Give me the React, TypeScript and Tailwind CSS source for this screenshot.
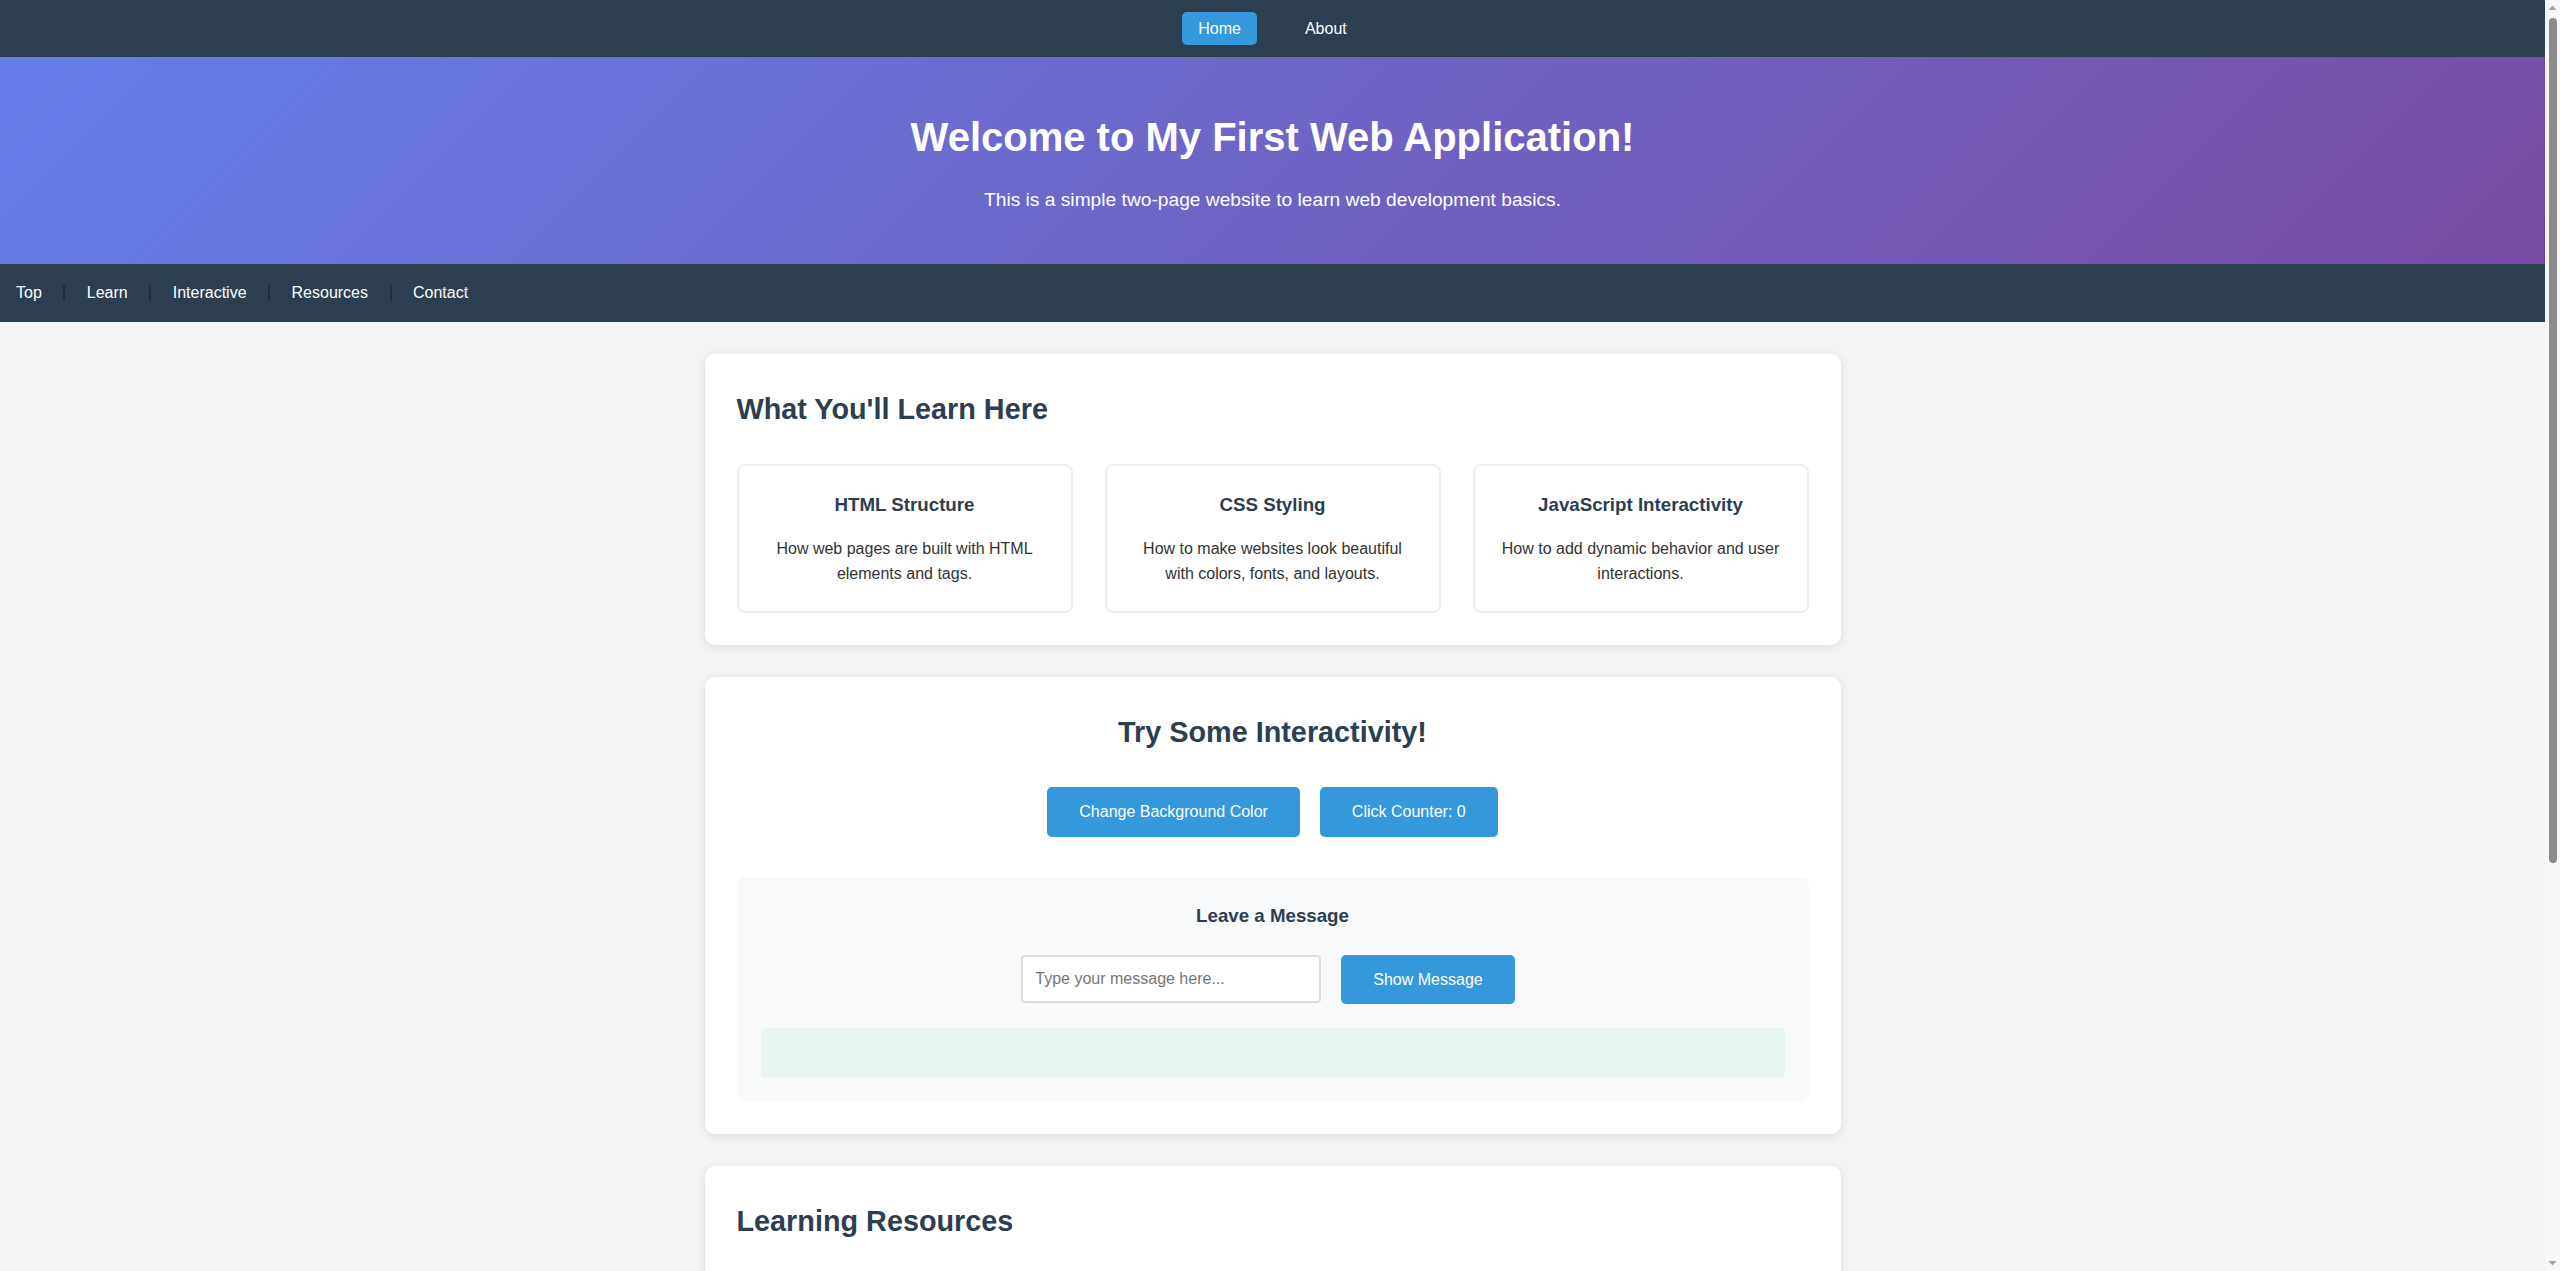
import React, { useState } from 'react';

const features = [
    { title: 'HTML Structure', text: 'How web pages are built with HTML elements and tags.' },
    { title: 'CSS Styling', text: 'How to make websites look beautiful with colors, fonts, and layouts.' },
    { title: 'JavaScript Interactivity', text: 'How to add dynamic behavior and user interactions.' },
];

const resources = [
    { title: 'MDN Web Docs', text: 'The most complete reference for HTML, CSS and JavaScript.' },
    { title: 'W3Schools', text: 'Simple tutorials and examples for beginners.' },
    { title: 'freeCodeCamp', text: 'Free interactive lessons and practice projects.' },
];

const sectionLinks = ['Top', 'Learn', 'Interactive', 'Resources', 'Contact'];

// window scrollbar as it shows in the screenshot
const Scrollbar: React.FC = () => (
    <div className="fixed right-0 top-0 w-[15px] h-screen bg-[#f8f8f8] flex flex-col items-center">
        <svg width="15" height="15" viewBox="0 0 15 15" className="shrink-0">
            <path d="M3.5 10 L7.5 5.5 L11.5 10 Z" fill="#a3a3a3" />
        </svg>
        <div className="w-[8px] h-[845px] mt-[3px] rounded-full bg-[#8b8b8b]" />
        <div className="flex-1" />
        <svg width="15" height="15" viewBox="0 0 15 15" className="shrink-0">
            <path d="M3.5 5 L7.5 9.5 L11.5 5 Z" fill="#a3a3a3" />
        </svg>
    </div>
);

const App: React.FC = () => {
    const [count, setCount] = useState(0);
    const [message, setMessage] = useState('');
    const [output, setOutput] = useState('');

    return (
        <div className="min-h-screen pr-[15px] bg-[#f4f4f4] font-['Liberation_Sans',Arial,sans-serif] leading-[1.6] text-[#333] text-[16px]">
            {/* Page nav */}
            <nav className="h-[57px] bg-[#2c3e50] flex items-center justify-center gap-8">
                <a href="#" className="h-[33px] px-4 flex items-center rounded-[5px] bg-[#3498db] text-white">
                    Home
                </a>
                <a href="#" className="h-[33px] px-4 flex items-center text-white">
                    About
                </a>
            </nav>

            {/* Header */}
            <header className="bg-[linear-gradient(135deg,#667eea_0%,#764ba2_100%)] text-white text-center pt-12 pb-12">
                <h1 className="text-[40px] font-bold leading-[1.6] mb-4">Welcome to My First Web Application!</h1>
                <p className="text-[19.2px] leading-[1.6]">This is a simple two-page website to learn web development basics.</p>
            </header>

            {/* Section nav */}
            <nav className="h-[58px] bg-[#2c3e50] flex items-center pl-4 gap-[21.5px] text-white">
                {sectionLinks.map((link, i) => (
                    <React.Fragment key={link}>
                        {i > 0 && <span className="w-[2px] h-4 bg-[#222d38]" />}
                        <a href={`#${link.toLowerCase()}`}>{link}</a>
                    </React.Fragment>
                ))}
            </nav>

            <main className="max-w-[1200px] mx-auto px-8 py-8">
                {/* Learn */}
                <section className="bg-white rounded-[10px] p-8 mb-8 shadow-[0_2px_10px_rgba(0,0,0,0.1)]">
                    <h2 className="text-[28.8px] font-bold text-[#2c3e50] mb-8">What You'll Learn Here</h2>
                    <div className="grid grid-cols-3 gap-8">
                        {features.map((f) => (
                            <div key={f.title} className="border-2 border-[#ecf0f1] rounded-[8px] p-6 text-center">
                                <h3 className="text-[18.72px] font-bold text-[#2c3e50] mb-4">{f.title}</h3>
                                <p>{f.text}</p>
                            </div>
                        ))}
                    </div>
                </section>

                {/* Interactive */}
                <section className="bg-white rounded-[10px] p-8 mb-8 shadow-[0_2px_10px_rgba(0,0,0,0.1)] text-center">
                    <h2 className="text-[28.8px] font-bold text-[#2c3e50] mb-8">Try Some Interactivity!</h2>
                    <div className="flex justify-center gap-5 mb-10">
                        <button className="px-8 py-3 rounded-[5px] bg-[#3498db] text-white text-[16px] leading-[1.6]">
                            Change Background Color
                        </button>
                        <button
                            onClick={() => setCount(count + 1)}
                            className="px-8 py-3 rounded-[5px] bg-[#3498db] text-white text-[16px] leading-[1.6]"
                        >
                            Click Counter: {count}
                        </button>
                    </div>

                    <div className="bg-[#f8f9fa] rounded-[8px] p-6">
                        <h3 className="text-[18.72px] font-bold text-[#2c3e50] mb-6">Leave a Message</h3>
                        <div className="flex justify-center items-center gap-5 mb-6 pr-[9px]">
                            <input
                                type="text"
                                value={message}
                                onChange={(e) => setMessage(e.target.value)}
                                placeholder="Type your message here..."
                                className="w-[300px] h-[48px] px-3 border-2 border-[#ddd] rounded-[4px] bg-white text-[16px] placeholder:text-[#757575]"
                            />
                            <button
                                onClick={() => setOutput(message)}
                                className="px-8 py-3 rounded-[5px] bg-[#3498db] text-white text-[16px] leading-[1.6]"
                            >
                                Show Message
                            </button>
                        </div>
                        <div className="h-[50px] rounded-[5px] bg-[#e8f6f3] flex items-center justify-center">
                            {output}
                        </div>
                    </div>
                </section>

                {/* Resources */}
                <section className="bg-white rounded-[10px] p-8 mb-8 shadow-[0_2px_10px_rgba(0,0,0,0.1)]">
                    <h2 className="text-[28.8px] font-bold text-[#2c3e50] mb-8">Learning Resources</h2>
                    <div className="grid grid-cols-3 gap-8">
                        {resources.map((r) => (
                            <div key={r.title} className="border-2 border-[#ecf0f1] rounded-[8px] p-6 text-center">
                                <h3 className="text-[18.72px] font-bold text-[#2c3e50] mb-4">{r.title}</h3>
                                <p>{r.text}</p>
                            </div>
                        ))}
                    </div>
                </section>

                {/* Contact */}
                <section className="bg-white rounded-[10px] p-8 shadow-[0_2px_10px_rgba(0,0,0,0.1)]">
                    <h2 className="text-[28.8px] font-bold text-[#2c3e50] mb-8">Contact</h2>
                    <p>Have questions about this project? Send an email to hello@example.com.</p>
                    <p>Thanks for visiting and happy coding!</p>
                </section>
            </main>

            <footer className="bg-[#2c3e50] text-white text-center py-8">
                &copy; 2024 My First Web Application. All rights reserved.
            </footer>

            <Scrollbar />
        </div>
    );
};

export default App;
